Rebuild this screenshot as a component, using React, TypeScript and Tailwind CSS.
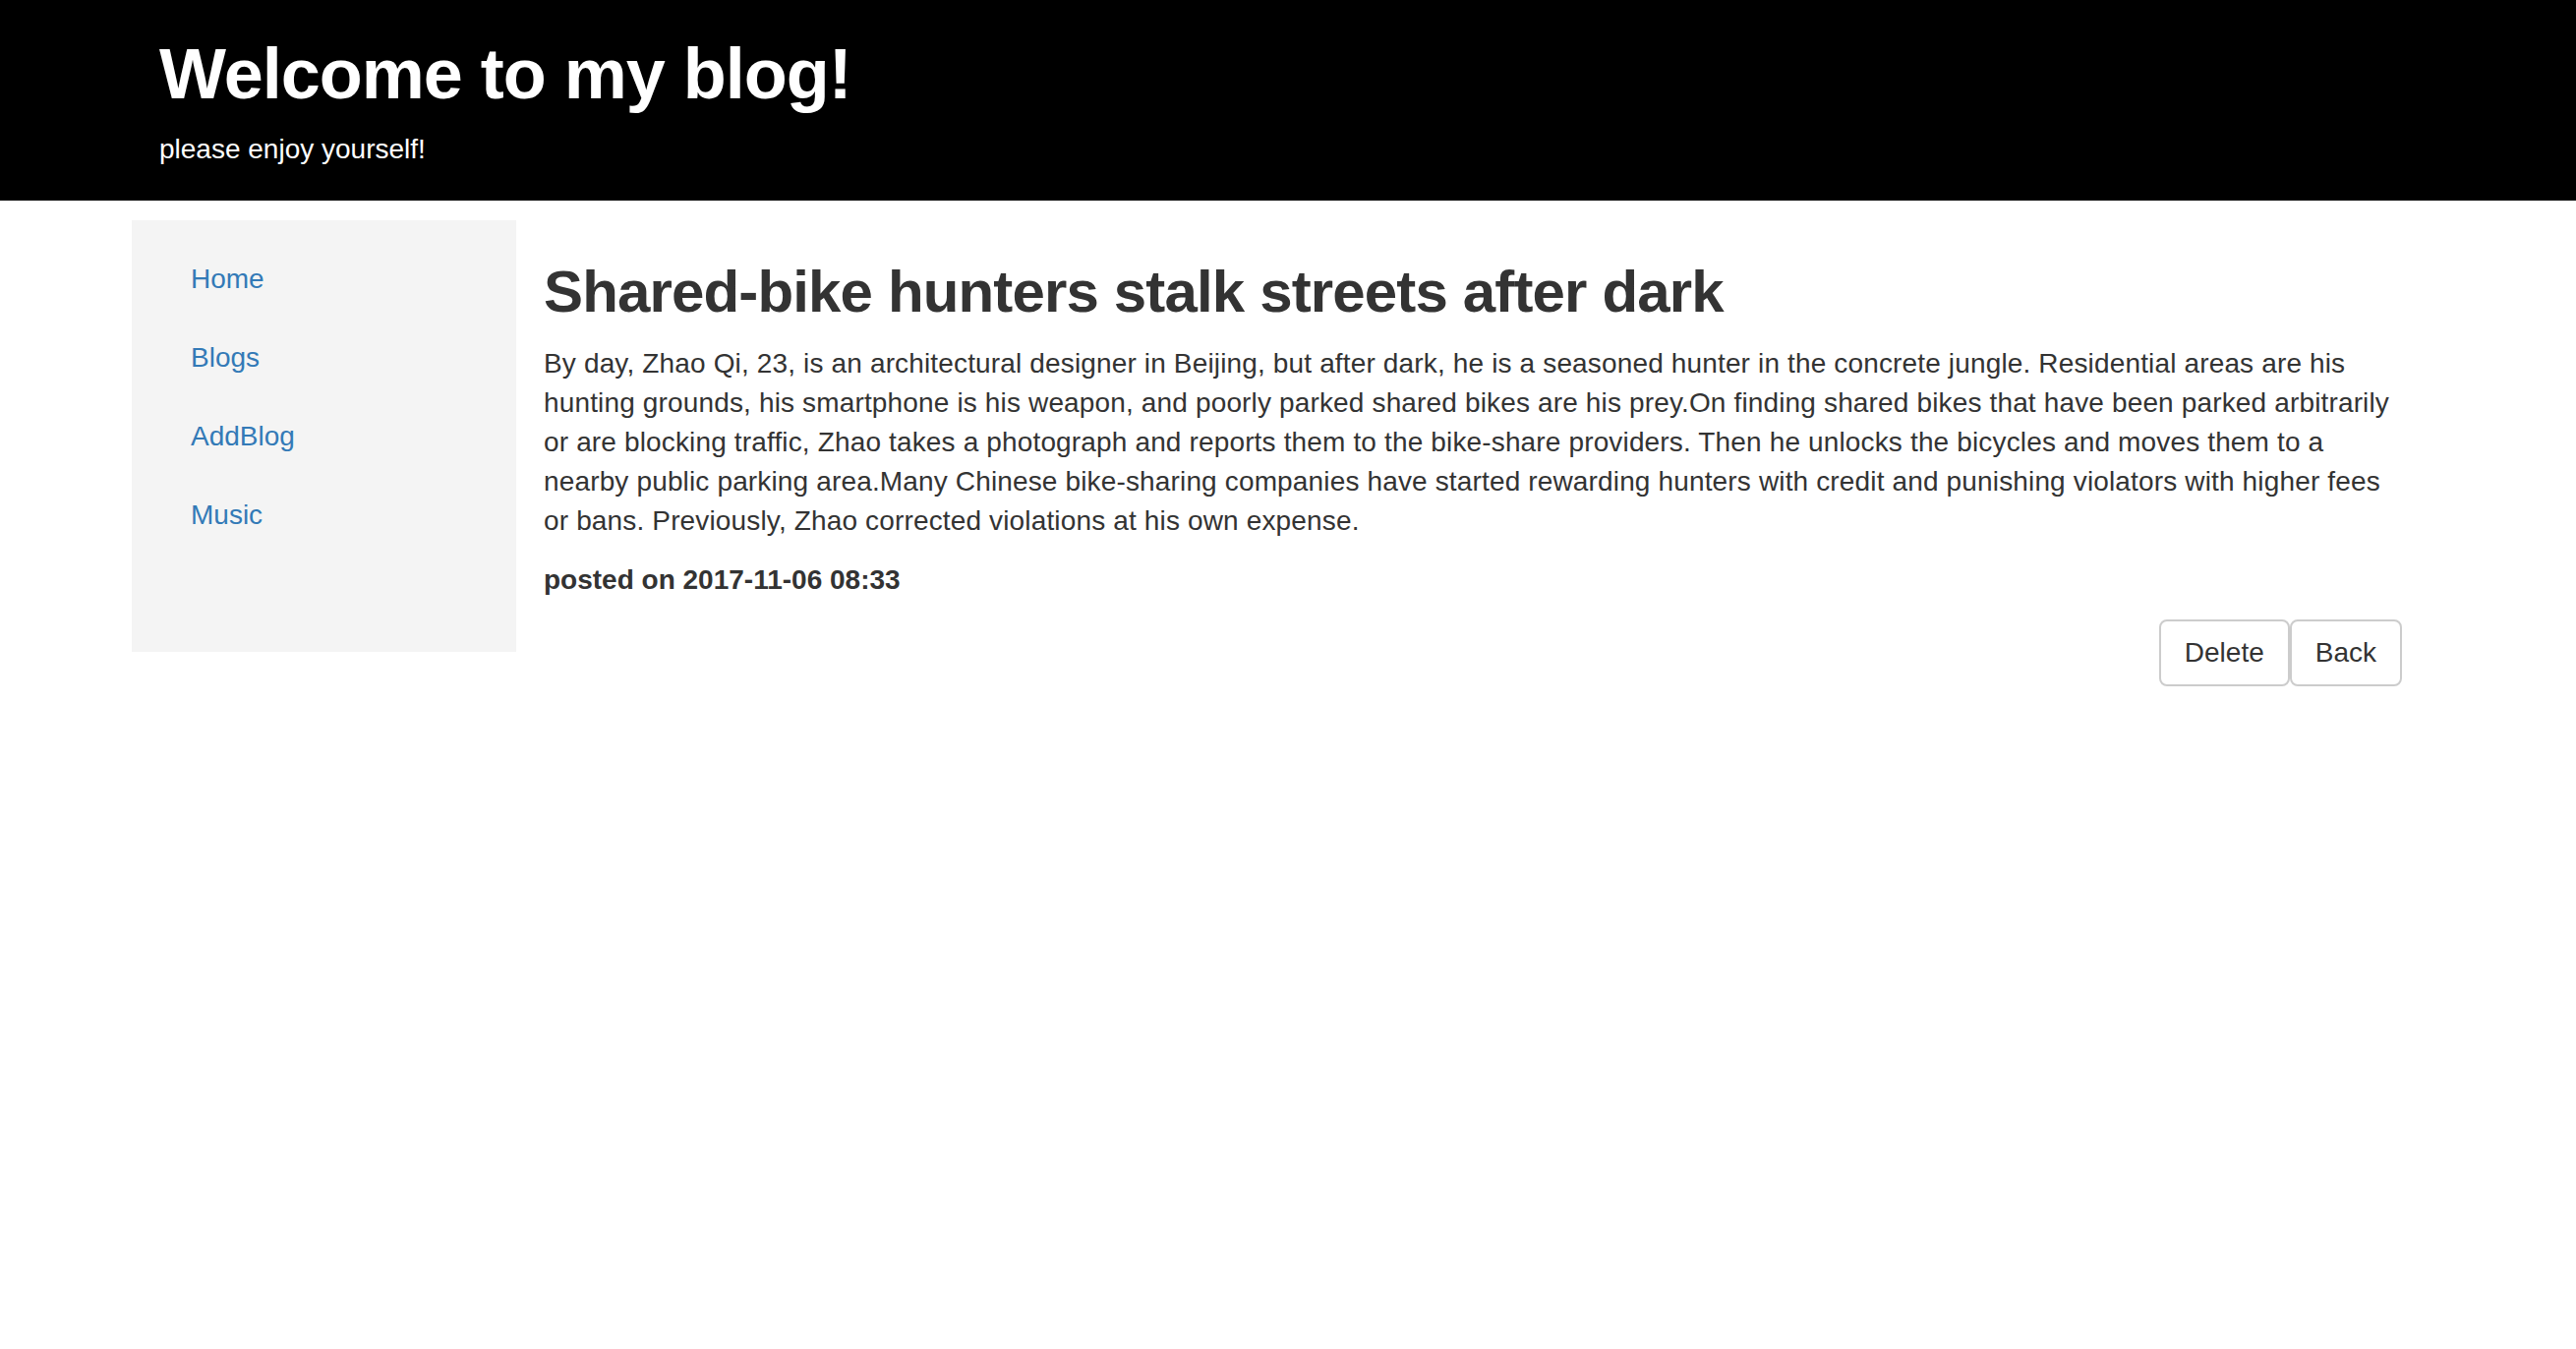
import React from 'react'

const navItems = ['Home', 'Blogs', 'AddBlog', 'Music']

const body =
    'By day, Zhao Qi, 23, is an architectural designer in Beijing, but after dark, he is a seasoned hunter in the concrete jungle. Residential areas are his hunting grounds, his smartphone is his weapon, and poorly parked shared bikes are his prey.On finding shared bikes that have been parked arbitrarily or are blocking traffic, Zhao takes a photograph and reports them to the bike-share providers. Then he unlocks the bicycles and moves them to a nearby public parking area.Many Chinese bike-sharing companies have started rewarding hunters with credit and punishing violators with higher fees or bans. Previously, Zhao corrected violations at his own expense.'

const App = () => {
    return (
        <div className="min-h-[1372px] bg-white font-['Liberation_Sans',Arial,sans-serif] text-[#333]">
            {/* header */}
            <div className="bg-black text-white pl-[162px] pt-[36px] pb-[32px]">
                <h1 className="text-[72px] leading-[79px] font-bold tracking-[-1px]">Welcome to my blog!</h1>
                <p className="mt-[17px] text-[28px] leading-[40px]">please enjoy yourself!</p>
            </div>

            <div className="flex items-start pl-[134px] pr-[177px] mt-[20px] gap-[28px]">
                {/* sidebar */}
                <div className="w-[391px] shrink-0 bg-[#f4f4f4] pt-[20px] pb-[99px] px-[30px]">
                    {navItems.map((item) => (
                        <a
                            key={item}
                            href="#"
                            className="block px-[30px] py-[20px] text-[28px] leading-[40px] text-[#337ab7]"
                        >
                            {item}
                        </a>
                    ))}
                </div>

                {/* article */}
                <div className="flex-1 pt-[40px]">
                    <h2 className="text-[60px] leading-[66px] font-bold tracking-[-0.85px]">
                        Shared-bike hunters stalk streets after dark
                    </h2>
                    <p className="mt-[20px] text-[28px] leading-[40px] tracking-[0.15px]">{body}</p>
                    <p className="mt-[20px] text-[28px] leading-[40px] font-bold">posted on 2017-11-06 08:33</p>
                    <div className="mt-[20px] flex justify-end">
                        <button className="h-[68px] px-[24px] border-2 border-[#ccc] rounded-[8px] bg-white text-[28px] leading-[40px] text-[#333]">
                            Delete
                        </button>
                        <button className="h-[68px] px-[24px] border-2 border-[#ccc] rounded-[8px] bg-white text-[28px] leading-[40px] text-[#333]">
                            Back
                        </button>
                    </div>
                </div>
            </div>
        </div>
    )
}

export default App
